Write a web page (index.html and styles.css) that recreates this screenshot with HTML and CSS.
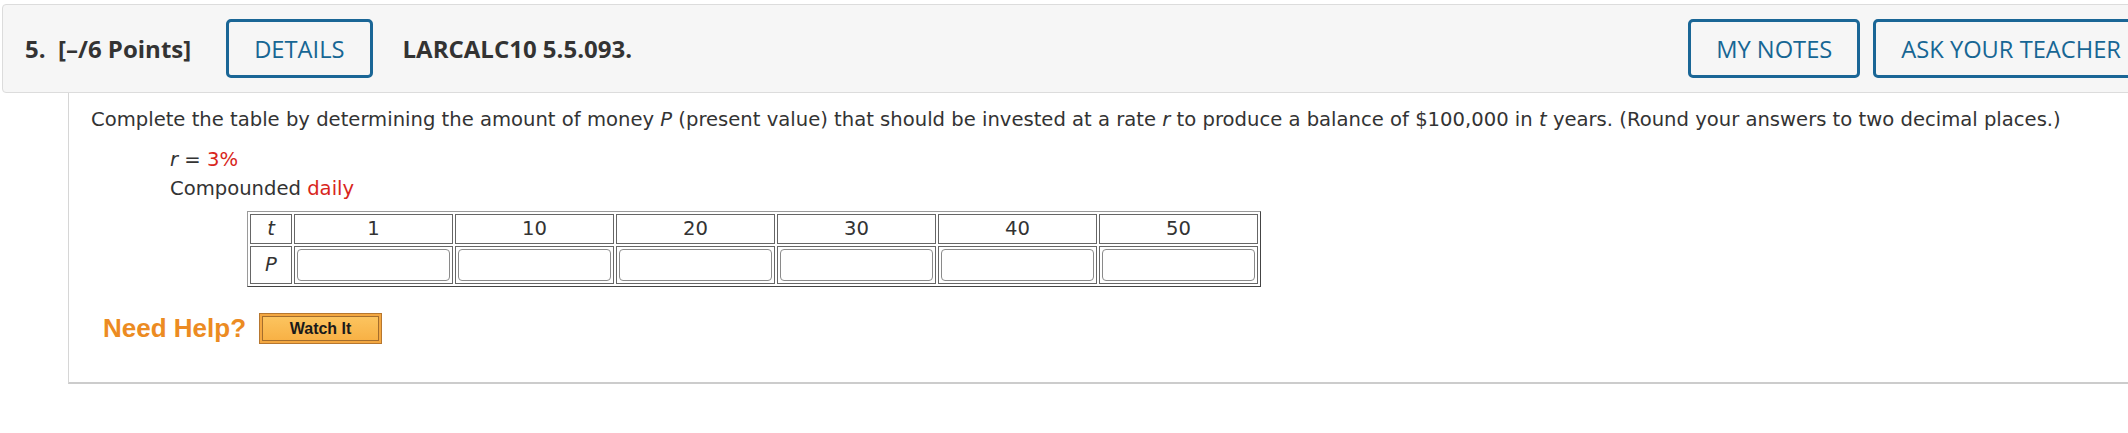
FILE: index.html
```html
<!DOCTYPE html>
<html>
<head>
<meta charset="utf-8">
<link rel="stylesheet" href="styles.css">
</head>
<body>
<div class="page">
  <div class="qheader">
    <span class="qnum">5.&nbsp; [–/6 Points]</span>
    <button class="btn">DETAILS</button>
    <span class="qref">LARCALC10 5.5.093.</span>
    <div class="actions">
      <button class="btn">MY NOTES</button>
      <button class="btn">ASK YOUR TEACHER</button>
    </div>
  </div>
  <div class="qbody">
    <p class="prompt">Complete the table by determining the amount of money <i>P</i> (present value) that should be invested at a rate <i>r</i> to produce a balance of $100,000 in <i>t</i> years. (Round your answers to two decimal places.)</p>
    <div class="given">
      <div class="line"><i>r</i> = <span class="red">3%</span></div>
      <div class="line">Compounded <span class="red">daily</span></div>
      <table class="grid">
        <tr>
          <td class="lab"><i>t</i></td>
          <td>1</td><td>10</td><td>20</td><td>30</td><td>40</td><td>50</td>
        </tr>
        <tr>
          <td class="lab"><i>P</i></td>
          <td><span class="inp"></span></td>
          <td><span class="inp"></span></td>
          <td><span class="inp"></span></td>
          <td><span class="inp"></span></td>
          <td><span class="inp"></span></td>
          <td><span class="inp"></span></td>
        </tr>
      </table>
    </div>
    <div class="help">
      <span class="need">Need Help?</span>
      <span class="watch"><span class="watch-in">Watch It</span></span>
    </div>
  </div>
</div>
</body>
</html>
```

FILE: styles.css
```css
html, body {
  margin: 0;
  padding: 0;
  overflow: hidden;
  background: #ffffff;
}

.page {
  padding: 4px 0 0 2px;
  width: 2170px;
}

.qheader {
  display: flex;
  align-items: center;
  height: 87px;
  padding: 0 22px;
  background: #f6f6f6;
  border: 1px solid #dcdcdc;
  border-radius: 4px;
  font-family: "Open Sans", sans-serif;
  color: #333333;
}

.qnum {
  font-size: 24px;
  font-weight: 700;
  margin-right: 35px;
  white-space: nowrap;
}

.qref {
  font-size: 24px;
  font-weight: 700;
  margin-left: 30px;
  white-space: nowrap;
}

.btn {
  font-family: "Open Sans", sans-serif;
  font-size: 23.7px;
  color: #176694;
  background: transparent;
  border: 3px solid #1a6696;
  border-radius: 5px;
  height: 59px;
  padding: 0 25px;
  white-space: nowrap;
}

.actions {
  margin-left: auto;
  display: flex;
  gap: 13px;
}

.qbody {
  margin-left: 66px;
  border-left: 1px solid #d6d6d6;
  border-bottom: 2px solid #cccccc;
  height: 289px;
  padding: 0 0 0 22px;
  font-family: "DejaVu Sans", Verdana, sans-serif;
  font-size: 19.6px;
  color: #333333;
}

.prompt {
  margin: 0;
  padding-top: 14px;
  line-height: 26px;
  white-space: nowrap;
}

.given {
  padding-left: 79px;
  padding-top: 12px;
}

.line {
  line-height: 29px;
}

.red {
  color: #d8261c;
}

.grid {
  margin-left: 77px;
  margin-top: 8px;
  border-collapse: separate;
  border-spacing: 2px;
  border: 1px solid;
  border-color: #9a9a9a #444444 #444444 #9a9a9a;
}

.grid td {
  border: 1px solid #666666;
  width: 157px;
  height: 28px;
  padding: 0;
  text-align: center;
  vertical-align: middle;
  line-height: 24px;
}

.grid td.lab {
  width: 40px;
}

.grid tr + tr td {
  height: 36px;
}

.inp {
  display: block;
  margin: 2px;
  height: 30px;
  border: 1px solid #8a8a8a;
  border-radius: 4px;
  background: #ffffff;
}

.help {
  display: flex;
  align-items: center;
  gap: 13px;
  margin-left: 12px;
  margin-top: 26px;
}

.need {
  font-family: "Liberation Sans", Arial, sans-serif;
  font-weight: 700;
  font-size: 26px;
  color: #ec8b22;
}

.watch {
  display: inline-block;
  border: 1px solid #b7772f;
  background: #f3a741;
  padding: 2px;
}

.watch-in {
  display: block;
  width: 115px;
  height: 23px;
  line-height: 23px;
  text-align: center;
  border: 1px solid #a46d2c;
  background: linear-gradient(#fcc45f, #f8b145);
  font-family: "Liberation Sans", Arial, sans-serif;
  font-weight: 700;
  font-size: 16px;
  color: #1a1a1a;
}
```
